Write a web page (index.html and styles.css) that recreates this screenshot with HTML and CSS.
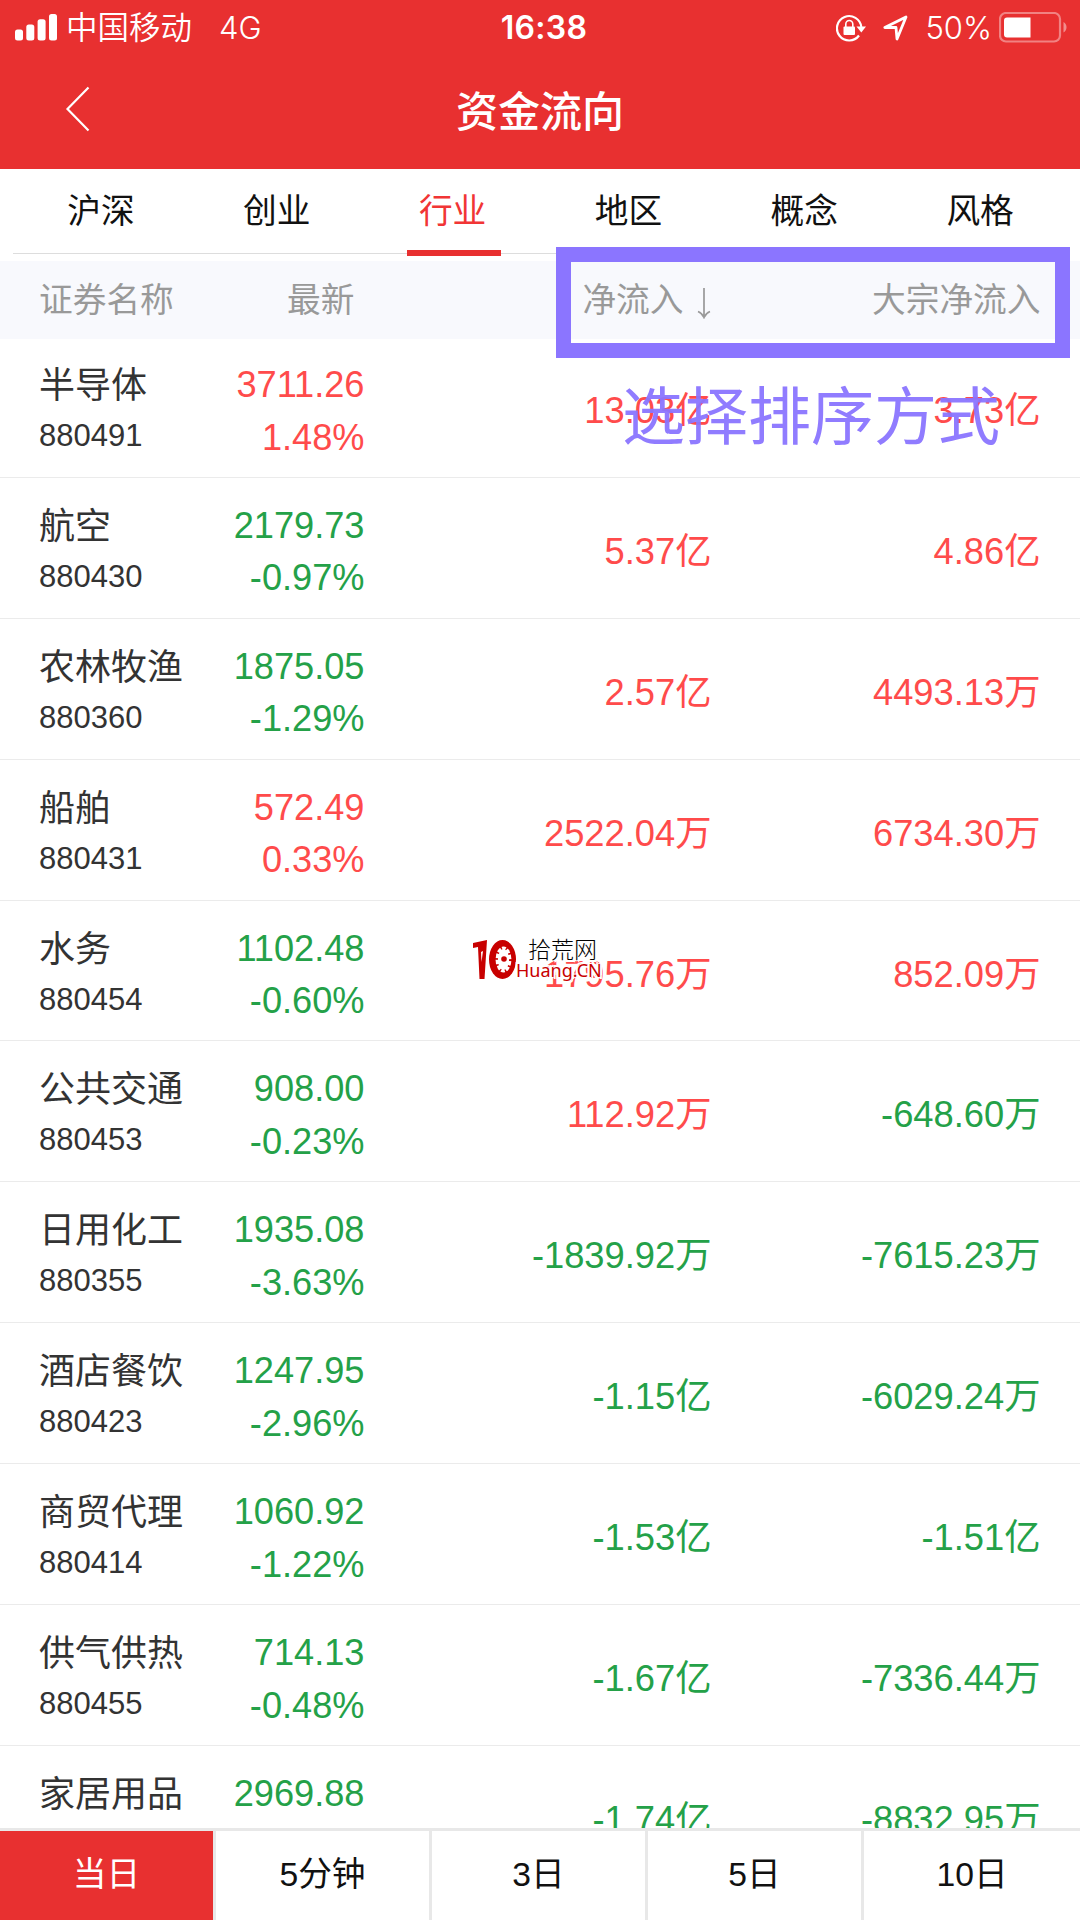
FILE: index.html
```html
<!DOCTYPE html>
<html lang="zh-CN">
<head>
<meta charset="utf-8">
<title>资金流向</title>
<link rel="stylesheet" href="styles.css">
</head>
<body>
<div class="screen">
  <header class="top">
    <div class="status">
      <div class="status-left">
        <svg class="signal" width="42" height="27" viewBox="0 0 42 27" fill="#fff"><rect x="0" y="15.500" width="8" height="11" rx="2.500"/><rect x="11.300" y="10.500" width="8" height="16" rx="2.500"/><rect x="22.600" y="5.300" width="8" height="21.200" rx="2.500"/><rect x="34" y="0" width="8" height="26.500" rx="2.500"/></svg>
        <span class="carrier">中国移动</span><span class="network">4G</span>
      </div>
      <span class="clock">16:38</span>
      <div class="status-right">
        <svg class="lock" width="30" height="28" viewBox="0 0 30 28"><path d="M23 21.500A12.200 12.200 0 1 1 25.300 13" fill="none" stroke="#fff" stroke-width="2.200"/><path d="M20.500 12.600h9.500l-4.700 5.800z" fill="#fff"/><rect x="7.500" y="12.500" width="11.500" height="8.500" rx="1" fill="#fff"/><path d="M9.800 13V10a3.500 3.500 0 0 1 7 0V13" fill="none" stroke="#fff" stroke-width="1.600"/></svg>
        <svg class="locate" width="25" height="26" viewBox="0 0 25 26"><path d="M1.800 12.500 23 2 14 24 13 12.500Z" fill="none" stroke="#fff" stroke-width="2.800" stroke-linejoin="round"/></svg>
        <span class="percent">50%</span>
        <svg class="battery" width="69" height="31" viewBox="0 0 69 31"><rect x="1" y="1" width="60" height="28.500" rx="6" fill="none" stroke="#fff" stroke-opacity=".4" stroke-width="2.200"/><path d="M8 5.500h23.500v20H8a3 3 0 0 1-3-3V8.500a3 3 0 0 1 3-3z" fill="#fff"/><path d="M64.500 10c4 2.500 4 8 0 10.500z" fill="#fff" fill-opacity=".45"/></svg>
      </div>
    </div>
    <div class="titlebar">
      <svg class="back" width="26" height="46" viewBox="0 0 26 46"><path d="M23.500 1.500 2.500 23 23.500 44.500" fill="none" stroke="#fff" stroke-width="2.200"/></svg>
      <h1>资金流向</h1>
    </div>
  </header>

  <nav class="tabs"><span>沪深</span><span>创业</span><span class="active">行业</span><span>地区</span><span>概念</span><span>风格</span></nav>

  <div class="columns">
    <span>证券名称</span><span class="latest">最新</span>
    <span class="net">净流入<svg class="sort" width="14" height="31" viewBox="0 0 14 31"><path d="M7 0v29M1 23.500Q5 25 7 29.500Q9 25 13 23.500" fill="none" stroke="#999" stroke-width="1.700"/></svg></span>
    <span>大宗净流入</span>
  </div>

  <main class="list">
    <div class="row up"><div class="name">半导体<small>880491</small></div><div class="price">3711.26<br>1.48%</div><b>13.03亿</b><b>3.73亿</b></div>
    <div class="row down"><div class="name">航空<small>880430</small></div><div class="price">2179.73<br>-0.97%</div><b class="up">5.37亿</b><b class="up">4.86亿</b></div>
    <div class="row down"><div class="name">农林牧渔<small>880360</small></div><div class="price">1875.05<br>-1.29%</div><b class="up">2.57亿</b><b class="up">4493.13万</b></div>
    <div class="row up"><div class="name">船舶<small>880431</small></div><div class="price">572.49<br>0.33%</div><b>2522.04万</b><b>6734.30万</b></div>
    <div class="row down"><div class="name">水务<small>880454</small></div><div class="price">1102.48<br>-0.60%</div><b class="up">1795.76万</b><b class="up">852.09万</b></div>
    <div class="row down"><div class="name">公共交通<small>880453</small></div><div class="price">908.00<br>-0.23%</div><b class="up">112.92万</b><b>-648.60万</b></div>
    <div class="row down"><div class="name">日用化工<small>880355</small></div><div class="price">1935.08<br>-3.63%</div><b>-1839.92万</b><b>-7615.23万</b></div>
    <div class="row down"><div class="name">酒店餐饮<small>880423</small></div><div class="price">1247.95<br>-2.96%</div><b>-1.15亿</b><b>-6029.24万</b></div>
    <div class="row down"><div class="name">商贸代理<small>880414</small></div><div class="price">1060.92<br>-1.22%</div><b>-1.53亿</b><b>-1.51亿</b></div>
    <div class="row down"><div class="name">供气供热<small>880455</small></div><div class="price">714.13<br>-0.48%</div><b>-1.67亿</b><b>-7336.44万</b></div>
    <div class="row down"><div class="name">家居用品</div><div class="price">2969.88</div><b>-1.74亿</b><b>-8832.95万</b></div>
  </main>

  <footer class="periods"><span class="active">当日</span><span>5分钟</span><span>3日</span><span>5日</span><span>10日</span></footer>

  <div class="highlight"></div>
  <div class="note">选择排序方式</div>
  <div class="watermark">
    <svg width="44" height="42" viewBox="0 0 44 42"><path d="M0 3 14 0 11.500 39H6.500L5 7 0 8Z" fill="#c80000"/><path d="M8 12 10 11 8.500 22Z" fill="#fff"/><ellipse cx="29.500" cy="19.500" rx="13.500" ry="19.500" fill="#c80000"/><ellipse cx="30.500" cy="19.500" rx="8" ry="13" fill="#fff"/><ellipse cx="30.500" cy="19.500" rx="7.500" ry="12.500" fill="none" stroke="#c80000" stroke-width="4" stroke-dasharray="1.600 4.700"/><circle cx="31" cy="19" r="2.800" fill="#c80000"/></svg>
    <span class="wm-cn">拾荒网</span><span class="wm-en">Huang.CN</span>
  </div>
</div>
</body>
</html>
```
FILE: styles.css
```css
* { box-sizing: border-box; }
body { margin: 0; background: #fff; font-family: "Liberation Sans", "Noto Sans CJK SC", sans-serif; }
.screen { position: relative; width: 1080px; height: 1920px; overflow: hidden; display: flex; flex-direction: column; }

.top { height: 169px; flex: none; background: #e83030; color: #fff; }
.status { height: 54px; display: grid; grid-template-columns: 1fr auto 1fr; align-items: center; padding: 0 12px 0 16px; font: 31px/54px Inter, "Noto Sans CJK SC", sans-serif; }
.status-left, .status-right { display: flex; align-items: center; }
.status-left { margin-left: -1px; }
.status-right { justify-content: flex-end; }
.carrier { margin-left: 9px; font-size: 31.5px; font-weight: 350; }
.network { margin-left: 27px; font-weight: 350; padding-top: 1px; }
.clock { font-weight: 600; font-size: 32px; letter-spacing: .3px; padding: 1px 0 0 4px; }
.locate { margin-left: 17px; }
.percent { margin: 1px 7px 0 17px; font-weight: 350; font-size: 31px; }
.titlebar { height: 110px; display: grid; grid-template-columns: 200px 1fr 200px; align-items: center; }
.back { margin-left: 65px; }
h1 { margin: 0; text-align: center; font: 500 42px/108px "Noto Sans CJK SC", sans-serif; }

.tabs { height: 92px; flex: none; display: grid; grid-template-columns: repeat(6, 1fr); margin: 0 12px 0 13px; text-align: center; font: 400 33.7px/79px "Noto Sans CJK SC", sans-serif; color: #111; }
.tabs span { height: 85px; border-bottom: 1px solid #ddd; position: relative; }
.tabs .active { color: #f13535; }
.tabs .active::after { content: ""; position: absolute; left: 42px; bottom: -3px; width: 94px; height: 6px; background: #e83030; }

.columns, .row { display: grid; grid-template-columns: 151px 174.500px 347px 1fr; padding: 0 39.500px 0 39px; text-align: right; }
.columns { height: 78px; flex: none; background: #f8f9fd; color: #999; font: 400 33.7px/73px "Noto Sans CJK SC", sans-serif; white-space: nowrap; }
.columns span:first-child { text-align: left; }
.columns .latest { padding-right: 10px; }
.sort { vertical-align: -7px; margin: 0 1px 0 13px; }

.list { flex: 1; overflow: hidden; margin-top: -2px; }
.row { height: 140.900px; border-bottom: 1px solid #ebebeb; font-size: 36px; }
.up, .down .up { color: #ff4b4b; }
.down { color: #24a148; }
.name { padding-top: 19px; text-align: left; white-space: nowrap; color: #333; font: 400 36px/52px "Noto Sans CJK SC", sans-serif; }
.name small { display: block; margin-top: 2px; font: 31px/52px "Liberation Sans", sans-serif; }
.price { padding-top: 22px; font-size: 36.2px; line-height: 52.5px; }
.row b { font: 400 36.3px/52px "Liberation Sans", "Noto Sans CJK SC", sans-serif; padding-top: 48px; white-space: nowrap; }

.periods { height: 92px; flex: none; display: grid; grid-template-columns: repeat(5, 1fr); border-top: 3px solid #e8e8e8; text-align: center; font: 400 33.700px/87px "Liberation Sans", "Noto Sans CJK SC", sans-serif; color: #111; background: #fff; }
.periods span { border-right: 3px solid #e8e8e8; }
.periods span:last-child { border: 0; }
.periods .active { background: #e83030; color: #fff; }

.highlight { position: absolute; left: 556px; top: 247px; width: 514px; height: 111px; border: 15.500px solid #8b75ff; }
.note { position: absolute; left: 622px; top: 366px; font: 400 63px/92px "Noto Sans CJK SC", sans-serif; color: #8b75ff; opacity: .95; white-space: nowrap; }
.watermark { position: absolute; left: 473px; top: 940px; width: 132px; height: 45px; }
.watermark svg { position: absolute; left: 0; top: 0; }
.watermark span { position: absolute; white-space: nowrap; text-shadow: 1px 0 #fff, -1px 0 #fff, 0 1px #fff, 0 -1px #fff, 2px 2px #fff, -2px -2px #fff, 2px -2px #fff, -2px 2px #fff; }
.wm-cn { left: 55px; top: -7px; font: 300 23px/30px "Noto Sans CJK SC", sans-serif; color: #000; }
.wm-en { left: 43px; top: 17px; font: 18px/26px "Noto Sans", sans-serif; color: #c80000; }
```
